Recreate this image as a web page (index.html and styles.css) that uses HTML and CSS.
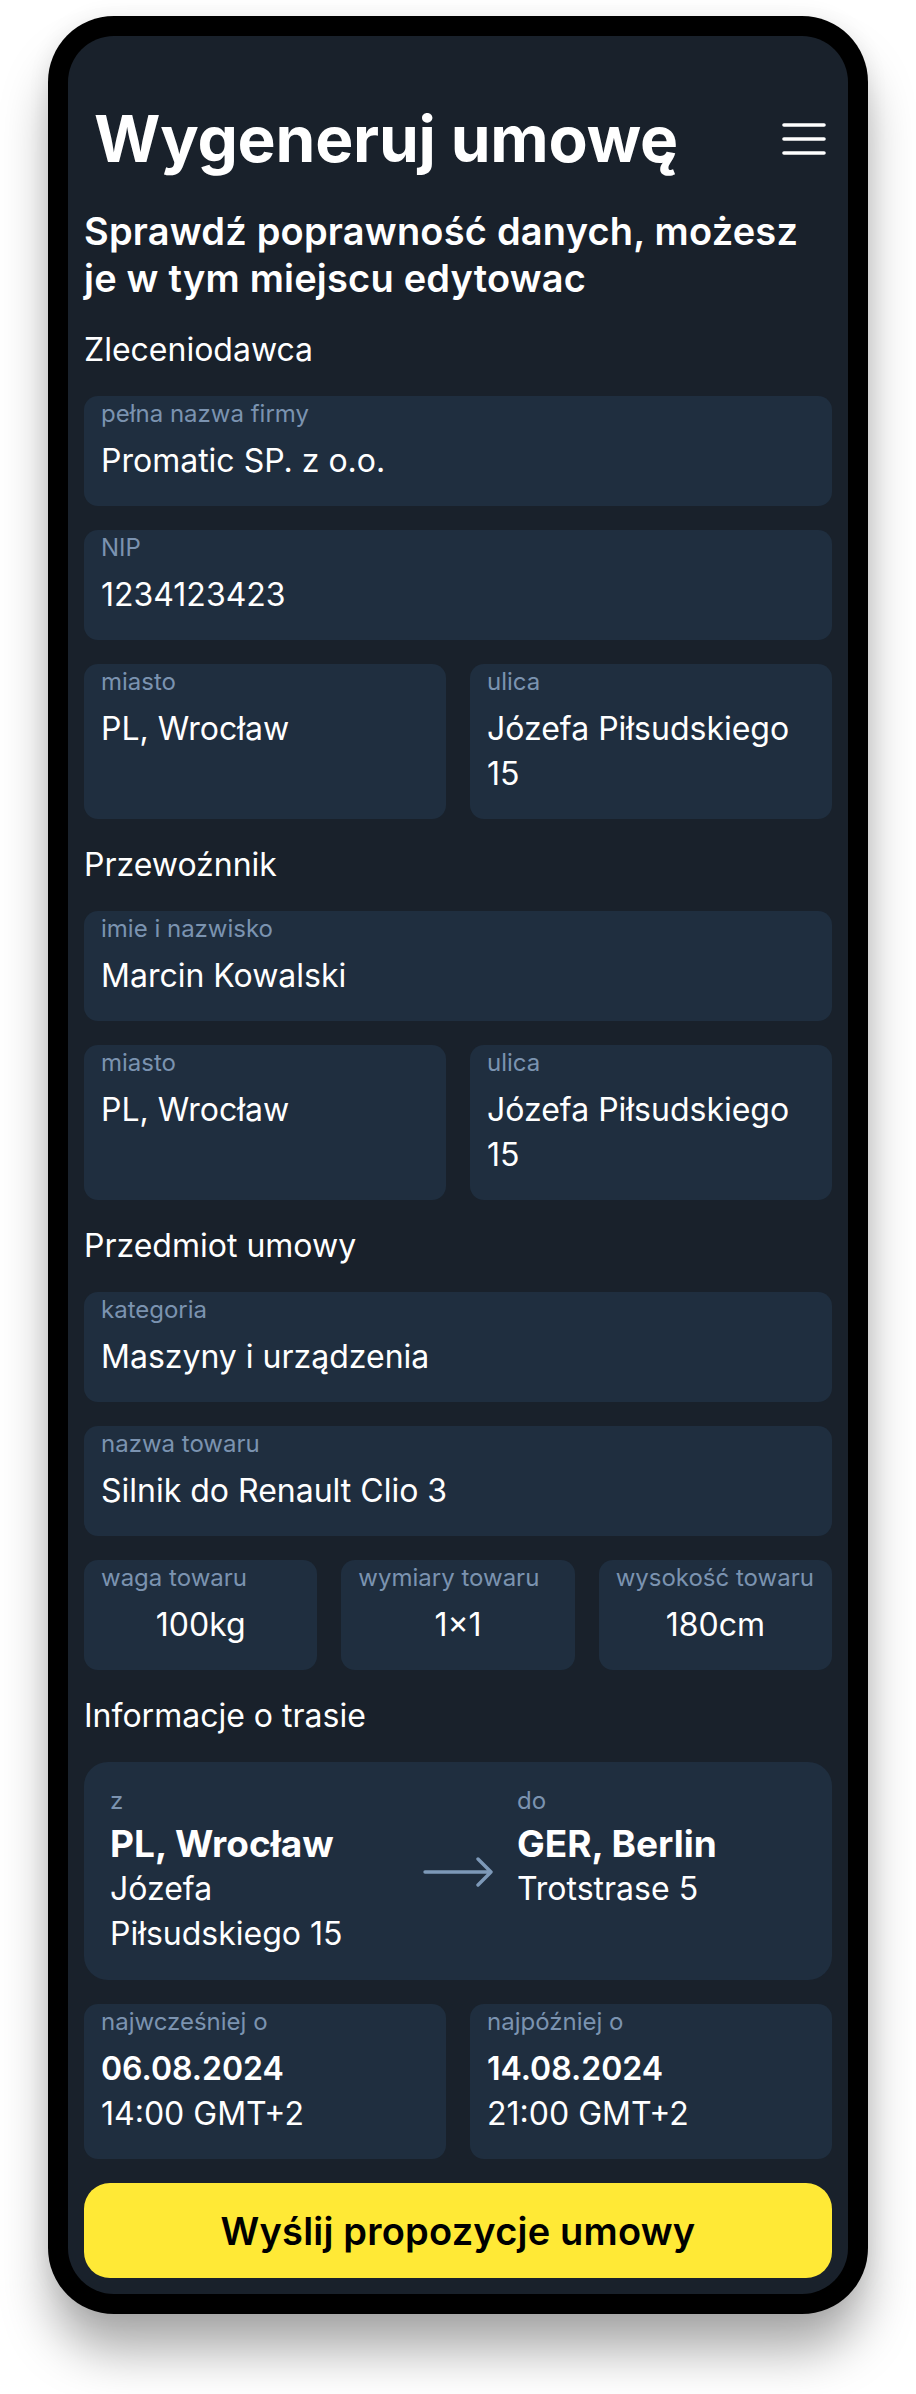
FILE: index.html
```html
<!DOCTYPE html>
<html lang="pl">
<head>
<meta charset="utf-8">
<title>Wygeneruj umowę</title>
<link rel="stylesheet" href="styles.css">
</head>
<body>
<div class="phone">
  <div class="screen">
    <header class="top">
      <h1 class="title">Wygeneruj umowę</h1>
      <button class="menu" type="button" aria-label="menu">
        <svg width="44" height="32" viewBox="0 0 44 32" aria-hidden="true">
          <path d="M2 2H42M2 16H42M2 30H42" stroke="#fff" stroke-width="3.6" stroke-linecap="round" fill="none"/>
        </svg>
      </button>
    </header>
    <main class="form">
      <p class="lead">Sprawdź poprawność danych, możesz je w tym miejscu edytowac</p>

      <h2 class="section">Zleceniodawca</h2>
      <div class="field"><span class="label">pełna nazwa firmy</span><span class="value">Promatic SP. z o.o.</span></div>
      <div class="field"><span class="label">NIP</span><span class="value">1234123423</span></div>
      <div class="row2">
        <div class="field"><span class="label">miasto</span><span class="value">PL, Wrocław</span></div>
        <div class="field"><span class="label">ulica</span><span class="value">Józefa Piłsudskiego 15</span></div>
      </div>

      <h2 class="section">Przewoźnnik</h2>
      <div class="field"><span class="label">imie i nazwisko</span><span class="value">Marcin Kowalski</span></div>
      <div class="row2">
        <div class="field"><span class="label">miasto</span><span class="value">PL, Wrocław</span></div>
        <div class="field"><span class="label">ulica</span><span class="value">Józefa Piłsudskiego 15</span></div>
      </div>

      <h2 class="section">Przedmiot umowy</h2>
      <div class="field"><span class="label">kategoria</span><span class="value">Maszyny i urządzenia</span></div>
      <div class="field"><span class="label">nazwa towaru</span><span class="value">Silnik do Renault Clio 3</span></div>
      <div class="row3">
        <div class="field"><span class="label">waga towaru</span><span class="value center">100kg</span></div>
        <div class="field"><span class="label">wymiary towaru</span><span class="value center">1×1</span></div>
        <div class="field"><span class="label">wysokość towaru</span><span class="value center">180cm</span></div>
      </div>

      <h2 class="section">Informacje o trasie</h2>
      <div class="route">
        <div class="stop">
          <span class="label">z</span>
          <span class="place">PL, Wrocław</span>
          <span class="value">Józefa Piłsudskiego 15</span>
        </div>
        <svg class="arrow" width="70" height="30" viewBox="0 0 70 30" aria-hidden="true">
          <path d="M2 15H68M55 2L68 15L55 28" stroke="#7d99b8" stroke-width="3.4" stroke-linecap="round" stroke-linejoin="round" fill="none"/>
        </svg>
        <div class="stop">
          <span class="label">do</span>
          <span class="place">GER, Berlin</span>
          <span class="value">Trotstrase 5</span>
        </div>
      </div>

      <div class="row2">
        <div class="field"><span class="label">najwcześniej o</span><span class="value strong">06.08.2024</span><span class="value">14:00 GMT+2</span></div>
        <div class="field"><span class="label">najpóźniej o</span><span class="value strong">14.08.2024</span><span class="value">21:00 GMT+2</span></div>
      </div>

      <button class="submit" type="button">Wyślij propozycje umowy</button>
    </main>
  </div>
</div>
</body>
</html>
```

FILE: styles.css
```css
* { box-sizing: border-box; }

html, body {
  margin: 0;
  padding: 0;
  background: #ffffff;
}

html {
  min-height: 100%;
}

body {
  min-height: 100vh;
  font-family: "Inter", "Noto Sans", "Liberation Sans", sans-serif;
  color: #ffffff;
  padding-top: 16px;
}

.phone {
  width: 820px;
  margin: 0 0 0 48px;
  background: #000000;
  border-radius: 66px;
  padding: 20px;
  box-shadow: 0 40px 50px -4px rgba(0, 0, 0, 0.34), 0 0 22px rgba(0, 0, 0, 0.07);
}

.screen {
  background: #19212b;
  border-radius: 46px;
  padding: 64px 16px 16px;
}

.top {
  display: flex;
  align-items: center;
  justify-content: space-between;
  padding: 0 6px 0 10px;
}

.title {
  margin: 0;
  font-size: 64px;
  line-height: 77px;
  font-weight: 700;
  letter-spacing: -0.2px;
}

.menu {
  display: block;
  border: 0;
  padding: 0;
  background: transparent;
  line-height: 0;
}

.form {
  display: flex;
  flex-direction: column;
  gap: 24px;
  margin-top: 31px;
}

.lead {
  margin: 0 0 2px;
  font-size: 38px;
  line-height: 47px;
  font-weight: 600;
  letter-spacing: 0.2px;
}

.section {
  margin: 0;
  font-size: 32px;
  line-height: 44px;
  font-weight: 400;
}

.field {
  background: #1f2e3f;
  border-radius: 14px;
  padding: 5px 17px 23px;
  display: flex;
  flex-direction: column;
  min-width: 0;
}

.label {
  display: block;
  font-size: 24px;
  line-height: 26px;
  color: #7b93b0;
  white-space: nowrap;
}

.value {
  display: block;
  font-size: 32px;
  line-height: 45px;
  font-weight: 400;
}

.field .label + .value {
  margin-top: 11px;
}

.value.center {
  text-align: center;
}

.value.strong {
  font-weight: 600;
}

.row2 {
  display: grid;
  grid-template-columns: 1fr 1fr;
  gap: 24px;
}

.row3 {
  display: grid;
  grid-template-columns: 1fr 1fr 1fr;
  gap: 24px;
}

.route {
  background: #1f2e3f;
  border-radius: 24px;
  padding: 26px 26px 24px;
  display: grid;
  grid-template-columns: 1fr 70px 1fr;
  gap: 24px;
  align-items: start;
}

.stop {
  display: flex;
  flex-direction: column;
}

.place {
  display: block;
  margin-top: 7px;
  font-size: 37px;
  line-height: 45px;
  font-weight: 700;
}

.arrow {
  align-self: center;
  display: block;
}

.submit {
  display: block;
  width: 100%;
  height: 95px;
  border: 0;
  border-radius: 26px;
  background: #ffe936;
  color: #000000;
  font-family: "Inter", "Noto Sans", "Liberation Sans", sans-serif;
  font-size: 38px;
  font-weight: 600;
  letter-spacing: 0.2px;
}
```
